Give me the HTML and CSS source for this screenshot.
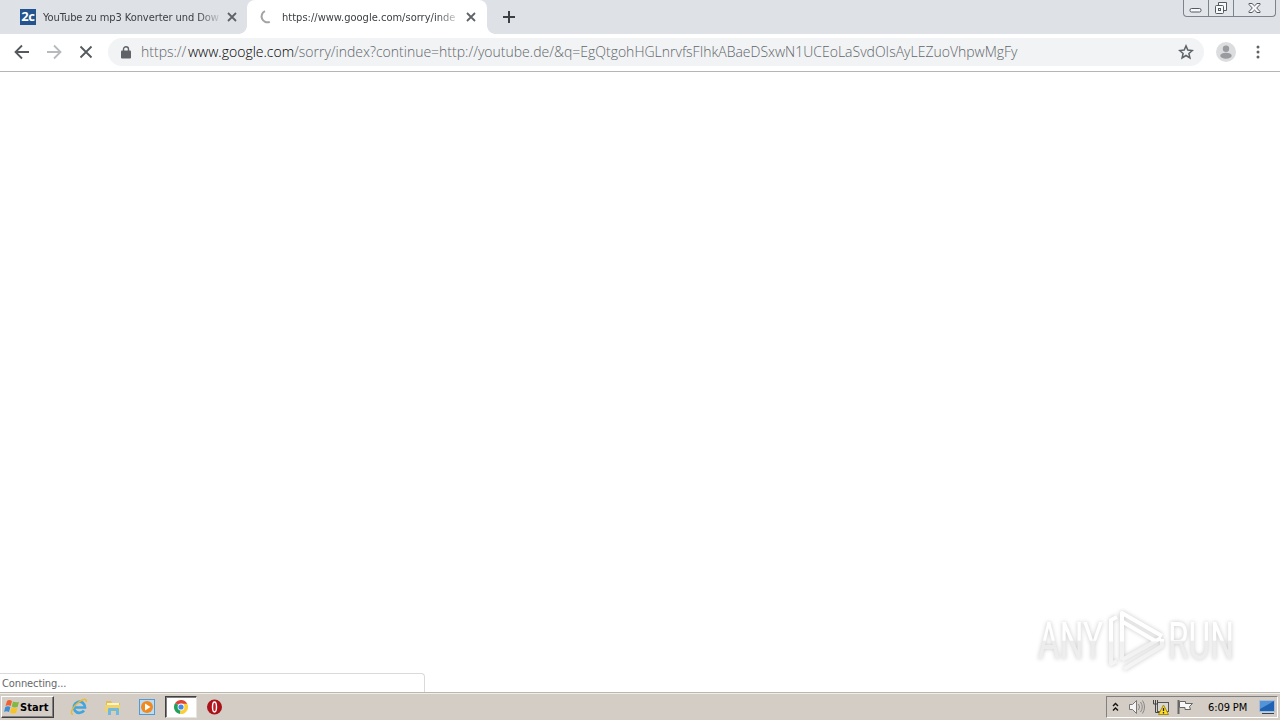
FILE: index.html
```html
<!DOCTYPE html>
<html lang="en">
<head>
  <meta charset="UTF-8">
  <meta name="viewport" content="width=device-width, initial-scale=1.0">
  <title>https://www.google.com/sorry/index</title>
  <link rel="stylesheet" href="styles.css">
</head>
<body>
  <div class="browser">
    <header class="tab-strip">
      <div class="tab">
        <span class="favicon">2c</span>
        <span class="tab-title first">YouTube zu mp3 Konverter und Dow</span>
        <svg class="tab-close" width="10" height="10" viewBox="0 0 10 10"><path d="M1 1l8 8M9 1L1 9"/></svg>
      </div>
      <div class="tab active">
        <svg class="spinner" width="14" height="14" viewBox="0 0 14 14"><path d="M6 1.2A5.8 5.8 0 0 0 10.8 11.8"/></svg>
        <span class="tab-title second">https://www.google.com/sorry/inde</span>
        <svg class="tab-close" width="10" height="10" viewBox="0 0 10 10"><path d="M1 1l8 8M9 1L1 9"/></svg>
      </div>
      <svg class="new-tab" width="12" height="12" viewBox="0 0 12 12"><path d="M6 0v12M0 6h12"/></svg>
      <div class="window-buttons">
        <span><svg width="13" height="17" viewBox="0 0 13 17"><rect x="1" y="8.5" width="11" height="3.5" rx="1.5"/></svg></span>
        <span><svg width="14" height="17" viewBox="0 0 14 17"><path d="M4.5 5.5v-3h8v8h-3"/><rect x="1.5" y="5.5" width="8" height="8" rx="1"/><rect x="4.5" y="8.5" width="2" height="2"/></svg></span>
        <span><svg width="13" height="17" viewBox="0 0 13 17"><path d="M1 3.5h3l2.5 2.4L9 3.5h3v1L8.7 8l3.3 3.5v1H9l-2.5-2.4L4 12.5H1v-1L4.3 8 1 4.5z"/></svg></span>
      </div>
    </header>

    <div class="toolbar">
      <svg class="nav" width="16" height="16" viewBox="0 0 16 16"><path d="M15 8H2M8 1.5L1.5 8 8 14.5"/></svg>
      <svg class="nav disabled" width="16" height="16" viewBox="0 0 16 16"><path d="M1 8h13M8 1.5L14.5 8 8 14.5"/></svg>
      <svg class="nav" width="16" height="16" viewBox="0 0 16 16"><path d="M2.5 2.5l11 11M13.5 2.5l-11 11"/></svg>
      <div class="omnibox">
        <svg class="lock" width="10" height="13" viewBox="0 0 10 13"><path d="M2.5 5V3.2a2.5 2.5 0 0 1 5 0V5" fill="none" stroke="#5f6368" stroke-width="1.4"/><rect x="0" y="4.5" width="10" height="8" rx="1" fill="#5f6368"/></svg>
        <span class="url"><span class="scheme">https://</span><span class="host">www.google.com</span><span class="path">/sorry/index?continue=http://youtube.de/&amp;q=EgQtgohHGLnrvfsFIhkABaeDSxwN1UCEoLaSvdOIsAyLEZuoVhpwMgFy</span></span>
        <svg class="star" width="16" height="16" viewBox="0 0 16 16"><path d="M8 1.9l1.8 4.2 4.5.4-3.4 3 1 4.4L8 11.5l-3.9 2.4 1-4.4-3.4-3 4.5-.4z"/></svg>
      </div>
      <svg class="avatar" width="20" height="20" viewBox="0 0 20 20"><circle cx="10" cy="10" r="10" fill="#dcdddf"/><circle cx="10" cy="6.7" r="3.2" fill="#999b9e"/><ellipse cx="10" cy="13.7" rx="5.7" ry="3" fill="#999b9e"/></svg>
      <svg class="menu" width="4" height="14" viewBox="0 0 4 14"><circle cx="2" cy="2" r="1.5"/><circle cx="2" cy="7" r="1.5"/><circle cx="2" cy="12" r="1.5"/></svg>
    </div>

    <main class="page">
      <div class="status">Connecting...</div>
      <svg class="watermark" width="210" height="76" viewBox="0 0 210 76">
        <defs>
          <linearGradient id="fade" x1="0" y1="0" x2="0" y2="1">
            <stop offset=".48" stop-color="#fff"/>
            <stop offset=".49" stop-color="#ececec"/>
            <stop offset="1" stop-color="#f0f0f0"/>
          </linearGradient>
          <linearGradient id="logoFade" x1="0" y1="0" x2="0" y2="1">
            <stop offset=".5" stop-color="#fff"/>
            <stop offset=".52" stop-color="#f0f0f0"/>
            <stop offset="1" stop-color="#f5f5f5"/>
          </linearGradient>
        </defs>
        <g class="wm-text">
          <text x="8" y="56" textLength="65" lengthAdjust="spacingAndGlyphs">ANY</text>
          <text x="138" y="56" textLength="66" lengthAdjust="spacingAndGlyphs">RUN</text>
        </g>
        <g class="wm-logo">
          <path d="M87 14L81 17V61L87 58M92 57V10L132 33M93 19L127 39M92 57L131 35M94 66L132 43V36" stroke="url(#logoFade)"/>
        </g>
      </svg>
    </main>
  </div>

  <footer class="taskbar">
    <div class="start">
      <svg width="16" height="16" viewBox="0 0 16 16">
        <path d="M3 2q2-2 5 0L6.7 7Q4 5.5 1.5 7z" fill="#ef6130"/>
        <path d="M9 2.500q3 1.500 6 .2L13.600 8Q10 9 7.700 7.500z" fill="#83b642"/>
        <path d="M1.300 8Q4 6.500 6.400 8L5 13q-3-1.500-5 0z" fill="#3c8dd4"/>
        <path d="M7.500 8.500q3 1.500 6 .3L12 14q-3 1-6-.5z" fill="#f8c327"/>
      </svg>
      <span>Start</span>
    </div>
    <div class="quick-launch">
      <div class="app">
        <svg width="18" height="18" viewBox="0 0 18 18"><path d="M14 12.500A5.600 5.600 0 1 1 15 9.500H5" fill="none" stroke="#42a5df" stroke-width="2.700"/><path d="M3 16.500C-1 16 3 8 9 4s8-3 7 0" fill="none" stroke="#e9b934" stroke-width="1.500"/></svg>
      </div>
      <div class="app">
        <svg width="18" height="18" viewBox="0 0 18 18"><path d="M2 3h5l1 2h8v9H2z" fill="#e0bd57"/><path d="M3 5h12v8H3z" fill="#fff5b8"/><path d="M1 7h15v7H1z" fill="#f0d371"/><path d="M4 17v-6q0-1 1-1h9q1 0 1 1v6h-3v-4H7v4z" fill="#70b9e3"/></svg>
      </div>
      <div class="app">
        <svg width="18" height="18" viewBox="0 0 18 18"><rect x="1.500" y="1.500" width="15" height="15" fill="#b9ddf6" stroke="#5599d1"/><circle cx="9" cy="9" r="6" fill="#f18a1e"/><path d="M7 5.500L12.500 9 7 12.500z" fill="#fff"/></svg>
      </div>
      <div class="app pressed">
        <svg width="16" height="16" viewBox="0 0 16 16"><path d="M8 8L2.200 4.100A7 7 0 0 1 14.200 4.700z" fill="#dc4437"/><path d="M8 8L2.200 4.100A7 7 0 0 0 7.200 15z" fill="#22a05b"/><path d="M8 8l-.8 7A7 7 0 0 0 14.200 4.700H8z" fill="#fbcf3b"/><circle cx="8" cy="8" r="3.400" fill="#fff"/><circle cx="8" cy="8" r="2.600" fill="#4687e8"/></svg>
      </div>
      <div class="app">
        <svg width="18" height="18" viewBox="0 0 18 18"><circle cx="8.500" cy="9" r="7.500" fill="#aa1118"/><ellipse cx="8.500" cy="9" rx="2" ry="5" fill="#c91c26" stroke="#fff" stroke-width="1.400"/></svg>
      </div>
    </div>
    <div class="tray">
      <svg class="chevrons" width="7" height="10" viewBox="0 0 7 10"><path d="M1 4l2.500-2.500L6 4M1 8.500L3.500 6 6 8.500"/></svg>
      <svg width="18" height="18" viewBox="0 0 18 18"><path d="M1.500 6.500h3l4-4v13l-4-4h-3z" fill="#f4f4f4" stroke="#777"/><path d="M10.500 6q2 3 0 6M12.500 4q3.500 5 0 10M14.500 2.500q4 6.500 0 13" fill="none" stroke="#888"/></svg>
      <svg width="18" height="18" viewBox="0 0 18 18"><rect x="5.500" y="4.500" width="11" height="9" fill="#d8d8d0" stroke="#555"/><path d="M1.500 2v4h4V2M3.500 6v8.500h5M3.500 2v4" fill="none" stroke="#444"/><path d="M11.500 7l5 9.500h-10z" fill="#ffdc24" stroke="#a58a16"/><path d="M11.500 10v3M11.500 14v1.500" stroke="#222" stroke-width="1.300"/></svg>
      <svg width="18" height="18" viewBox="0 0 18 18"><path d="M2.500 2v14" stroke="#666" stroke-width="2"/><path d="M3.500 3.500h6v2h7l-3 3 1 3H9v-2H3.500z" fill="#f7f7f7" stroke="#666"/></svg>
      <span class="clock">6:09 PM</span>
      <svg class="desktop" width="16" height="14" viewBox="0 0 16 14"><rect x=".5" y=".5" width="15" height="11" fill="#1f62b3" stroke="#a8bcd5"/><path d="M1 1h14L1 9z" fill="#5393d6"/><path d="M3 13.500h12" stroke="#24456c"/></svg>
    </div>
  </footer>
</body>
</html>
```
FILE: styles.css
```css
* {
  box-sizing: border-box;
}
body, html {
  margin: 0;
  padding: 0;
  width: 100%;
  height: 100%;
  overflow: hidden;
}
body {
  display: flex;
  flex-direction: column;
  background: #fff;
  font-family: "DejaVu Sans Condensed", "DejaVu Sans", sans-serif;
  font-stretch: condensed;
  font-size: 11px;
}
svg {
  display: block;
  flex-shrink: 0;
}
.browser {
  flex: 1;
  display: flex;
  flex-direction: column;
  min-height: 0;
}

/* tabs */
.tab-strip {
  display: flex;
  height: 34px;
  background: #dee1e6;
}
.tab {
  display: flex;
  align-items: center;
  width: 247px;
  padding-left: 20px;
  color: #3c4043;
}
.tab.active {
  position: relative;
  width: 240px;
  padding-left: 12px;
  background: #fff;
  border-radius: 8px 8px 0 0;
}
.tab.active::before,
.tab.active::after {
  content: "";
  position: absolute;
  bottom: 0;
  width: 8px;
  height: 8px;
}
.tab.active::before {
  left: -8px;
  background: radial-gradient(circle at 0 0, #dee1e6 7.5px, #fff 8px);
}
.tab.active::after {
  right: -8px;
  background: radial-gradient(circle at 100% 0, #dee1e6 7.5px, #fff 8px);
}
.favicon {
  width: 16px;
  height: 16px;
  margin-right: 7px;
  background: #245490;
  color: #fff;
  font: bold 13px/15px "Open Sans", sans-serif;
  letter-spacing: -0.3px;
  text-align: center;
}
.tab-title {
  width: 176px;
  margin-right: 8px;
  overflow: hidden;
  white-space: nowrap;
  line-height: 16px;
  padding-top: 1px;
  -webkit-mask-image: linear-gradient(to right, #000 155px, transparent 180px);
  mask-image: linear-gradient(to right, #000 155px, transparent 180px);
}
.tab-title.first {
  letter-spacing: -0.08px;
}
.tab-title.second {
  letter-spacing: 0.02px;
}
.tab-close path {
  stroke: #5f6368;
  stroke-width: 1.8;
}
.spinner {
  margin-right: 9px;
}
.spinner path {
  fill: none;
  stroke: #a1a3a5;
  stroke-width: 2;
}
.new-tab {
  margin: 11px 0 0 16px;
}
.new-tab path {
  stroke: #3c4043;
  stroke-width: 2;
}
.window-buttons {
  display: flex;
  width: 93px;
  height: 17px;
  margin-left: auto;
  margin-right: 4px;
  border: 1px solid #7e828a;
  border-top: 0;
  border-radius: 0 0 4px 4px;
  background: #e2e5ea;
}
.window-buttons span {
  display: flex;
  justify-content: center;
  width: 25px;
  border-right: 1px solid #7e828a;
}
.window-buttons span:first-child {
  padding-right: 1px;
}
.window-buttons span:last-child {
  flex: 1;
  border-right: 0;
}
.window-buttons svg * {
  fill: #f8f9fa;
  stroke: #555960;
}

/* toolbar */
.toolbar {
  display: flex;
  align-items: center;
  height: 38px;
  padding: 0 0 1px 14px;
  border-bottom: 1px solid #b4b5b7;
}
.nav {
  margin-right: 16px;
}
.nav path {
  fill: none;
  stroke: #55585c;
  stroke-width: 1.8;
}
.nav.disabled path {
  stroke: #b7b9bc;
}
.omnibox {
  display: flex;
  align-items: center;
  width: 1096px;
  height: 28px;
  margin-left: -2px;
  padding: 0 10px 0 13px;
  border-radius: 14px;
  background: #f1f3f4;
}
.url {
  display: flex;
  margin-left: 10px;
  font: 300 14px/20px "Open Sans", sans-serif;
  color: #5f666b;
  white-space: nowrap;
}
.scheme {
  width: 47px;
}
.host {
  width: 106px;
  color: #000;
}
.star {
  margin-left: auto;
}
.star path {
  fill: none;
  stroke: #5f6368;
  stroke-width: 1.5;
}
.avatar {
  margin-left: 12px;
}
.menu {
  margin-left: 20px;
  fill: #5f6368;
}

/* page */
.page {
  position: relative;
  flex: 1;
  display: flex;
  align-items: flex-end;
}
.status {
  width: 425px;
  height: 19px;
  padding-left: 2px;
  border: 1px solid #d9dadb;
  border-width: 1px 1px 0 0;
  border-radius: 0 4px 0 0;
  color: #65686b;
  line-height: 19px;
  letter-spacing: -0.1px;
}
.watermark {
  position: absolute;
  right: 40px;
  bottom: 13px;
  overflow: visible;
  filter: drop-shadow(0 0 2px rgba(0, 0, 0, 0.22));
}
.wm-text {
  fill: url(#fade);
  font: 51px "Roboto", sans-serif;
}
.wm-logo path {
  fill: none;
  stroke-width: 4;
  stroke-linejoin: round;
}

/* taskbar */
.taskbar {
  display: flex;
  align-items: center;
  height: 28px;
  padding: 1px 2px 0 1px;
  border-top: 1px solid #b9b7ae;
  background: #d4cdc5;
  box-shadow: inset 0 1px #f1eeea;
}
.start {
  display: flex;
  align-items: center;
  width: 53px;
  height: 22px;
  padding-left: 2px;
  border: 1px solid;
  border-color: #fff #404040 #404040 #fff;
  box-shadow: inset -1px -1px #808080;
  font-weight: bold;
  color: #000;
}
.start span {
  letter-spacing: 0.1px;
}
.quick-launch {
  display: flex;
  margin-left: 9px;
}
.app {
  display: flex;
  align-items: center;
  justify-content: center;
  width: 32px;
  height: 22px;
  margin-right: 2px;
}
.app.pressed {
  background: #fff;
  border: 1px solid;
  border-color: #404040 #e7e3de #e7e3de #404040;
  box-shadow: inset 1px 1px #808080;
}
.tray {
  display: flex;
  align-items: center;
  width: 172px;
  height: 22px;
  margin-left: auto;
  padding-left: 5px;
  border: 1px solid;
  border-color: #808080 #fff #fff #808080;
}
.tray svg {
  margin-right: 6px;
}
.tray .chevrons {
  margin-right: 9px;
}
.chevrons path {
  fill: none;
  stroke: #111;
  stroke-width: 1.4;
}
.clock {
  width: 41px;
  margin-left: 8px;
  color: #000;
  letter-spacing: -0.1px;
  white-space: nowrap;
}
.tray .desktop {
  margin: 0 0 0 10px;
}
```
